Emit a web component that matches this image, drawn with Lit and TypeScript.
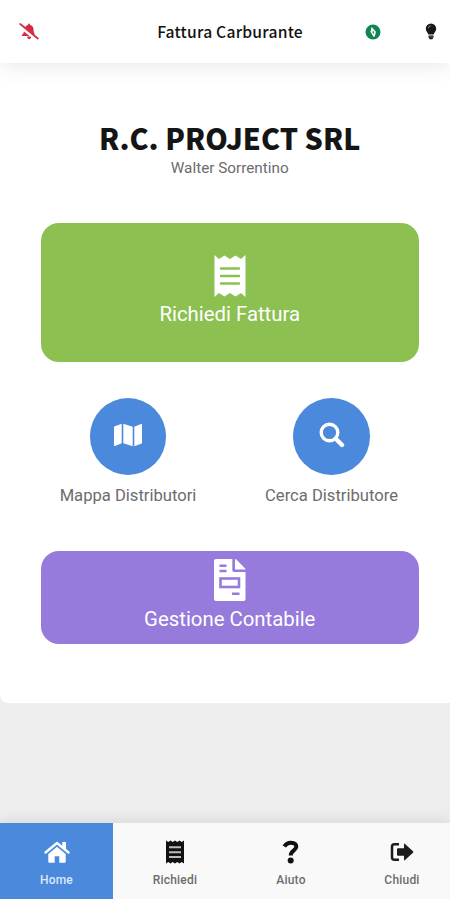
import { LitElement, html, css } from "lit";
import { customElement } from "lit/decorators.js";

const bellOff = html`<svg width="20" height="18" viewBox="0 0 20 18">
  <path fill="#d22c42" d="M6 4.300C6.800 2.800 8 2.200 9 1.900C9 1 9.400.4 10 .4S11 1 11.100 1.900C13.300 2.500 14.400 4 14.500 6.200C14.500 8.600 15 10 16 11.500L15 11.700Z"/>
  <path fill="#d22c42" d="M5 8.600L10.500 13H3.300C2.700 12.800 2.700 12.300 3 11.900C4.200 10.800 4.800 9.800 5 8.600ZM8 13.500H12C12 15.200 11.200 16.200 10.200 16.200S8.300 15.200 8 13.500Z"/>
  <path stroke="#d22c42" stroke-width="1.700" stroke-linecap="round" d="M1.200 1L18.800 15.500"/>
</svg>`;

const compass = html`<svg width="16" height="16" viewBox="0 0 16 16">
  <circle cx="8" cy="8" r="7.500" fill="#12854f"/>
  <path fill="#fff" d="M6.600 3L10.700 7.600C10.700 10 10.200 12.300 8.900 13.200L5.500 8Z"/>
  <path fill="#12854f" d="M7.900 6L9 8.300L8.500 10.300L7.600 8.600Z"/>
</svg>`;

const bulb = html`<svg width="12" height="17" viewBox="0 0 12 17">
  <path fill="#171717" d="M6 .5A5.200 5.200 0 0 1 11.200 5.700C11.200 8.200 9.200 9.200 8.700 11.500H3.300C2.800 9.200.8 8.200.8 5.700A5.200 5.200 0 0 1 6 .5ZM3.500 12.500H8.500V14.200L7.400 16.200H4.600L3.500 14.200Z"/>
  <path d="M3.300 5.300C3.400 3.900 4.300 3 5.800 2.900" fill="none" stroke="#aaa" stroke-width=".9"/>
  <path d="M3.600 14H8.400" stroke="#999" stroke-width=".6"/>
</svg>`;

const receiptLarge = html`<svg width="32" height="42" viewBox="0 0 32 42">
  <path fill="#fff" d="M.5 0L5 4L10.500 .6L16 4L21.500 .6L27 4L31.500 0V42L27 38L21.500 41.400L16 38L10.500 41.400L5 38L.5 42Z"/>
  <path stroke="#8cc152" stroke-width="2.400" stroke-linecap="round" d="M7 13.500H25M7 21H25M7 28.500H25"/>
</svg>`;

const receiptSmall = html`<svg width="18" height="24" viewBox="0 0 18 24">
  <path fill="#111" d="M0 .5L2.300 2L4.500 .5L6.700 2L9 .5L11.300 2L13.500 .5L15.700 2L18 .5V23.500L15.700 22L13.500 23.500L11.300 22L9 23.500L6.700 22L4.500 23.500L2.300 22L0 23.500Z"/>
  <path stroke="#bbb" stroke-width="2" d="M3 7.300H15M3 12.200H15M3 17H15"/>
</svg>`;

const mapIcon = html`<svg width="28" height="24" viewBox="0 0 28 24">
  <path fill="#fff" d="M0 4.200Q0 3.500.8 3.200L7.700 .7V20.300L1 23Q0 23.300 0 22.300ZM9.300 .7L18.700 3.800V23.300L9.300 20.200ZM20.300 3.700L27 1Q28 .7 28 1.700V19.800Q28 20.500 27.200 20.800L20.300 23.300Z"/>
</svg>`;

const search = html`<svg width="26" height="26" viewBox="0 0 26 26" fill="none" stroke="#fff">
  <circle cx="10.500" cy="10.500" r="8.300" stroke-width="3.400"/>
  <path d="M16.800 16.800L23 23" stroke-width="4.400" stroke-linecap="round"/>
</svg>`;

const invoice = html`<svg width="32" height="42" viewBox="0 0 32 42">
  <path fill="#fff" d="M2 0H18.300V11.200Q18.300 13 20.200 13H31.500V40Q31.500 42 29.500 42H2Q0 42 0 40V2Q0 0 2 0ZM21 0Q21.700 0 22.300 .6L30.900 9.200Q31.500 9.800 31.500 10.400H21Z"/>
  <path stroke="#967adc" stroke-width="2.500" d="M5.500 6.700H12.500M5.500 12H12.500M18 34.800H25.500"/>
  <rect x="6.500" y="19.500" width="18.500" height="8.500" fill="none" stroke="#967adc" stroke-width="2.600"/>
</svg>`;

const home = html`<svg width="26" height="22" viewBox="0 0 26 22">
  <path fill="none" stroke="#fff" stroke-width="2.300" stroke-linecap="round" stroke-linejoin="round" d="M1.500 11.500L13 2L24.500 11.500"/>
  <path fill="#fff" d="M18.300 1H22V8.700L18.300 5.600ZM13 5.700L21.700 12.900V20.700Q21.700 21.700 20.700 21.700H15.300V15.300H10.700V21.700H5.300Q4.300 21.700 4.300 20.700V12.900Z"/>
</svg>`;

const question = html`<svg width="18" height="24" viewBox="0 0 18 24">
  <path fill="none" stroke="#111" stroke-width="4" d="M2.300 6.500C4 3.700 6 2.600 9 2.700C12.300 2.800 14.300 4.300 14.300 6.800C14.300 10.600 8.700 10.200 8.700 15.600"/>
  <circle cx="8.700" cy="20.500" r="3" fill="#111"/>
</svg>`;

const exit = html`<svg width="24" height="20" viewBox="0 0 24 20">
  <path fill="none" stroke="#1c1c1c" stroke-width="2.500" d="M9 2.300H4.500Q2 2.300 2 4.800V15.200Q2 17.700 4.500 17.700H9"/>
  <path fill="#1c1c1c" d="M14 2.200Q14 1 15 2L23 9.200Q23.700 10 23 10.800L15 18Q14 19 14 17.800V13.700H8Q7 13.700 7 12.700V7.300Q7 6.300 8 6.300H14Z"/>
</svg>`;

@customElement("app-root")
export class AppRoot extends LitElement {
  static styles = css`
    :host {
      display: flex;
      flex-direction: column;
      width: 450px;
      height: 900px;
      overflow: hidden;
      background: #eee;
      font-family: Roboto, sans-serif;
      color: #6c6c6c;
    }
    svg { display: block; flex: none; }
    .header {
      height: 63px;
      flex: none;
      box-sizing: border-box;
      display: grid;
      grid-template-columns: 60px 340px 50px;
      align-items: center;
      background: #fff;
      box-shadow: 0 2px 22px rgba(0, 0, 0, 0.1);
      z-index: 1;
    }
    .bell { padding-left: 19px; }
    .middle {
      display: grid;
      grid-template-columns: 1fr 16px;
      align-items: center;
      padding-right: 19px;
    }
    .title {
      padding-left: 35px;
      text-align: center;
      font: 500 15.700px/24px "Noto Sans CJK JP", sans-serif;
      color: #111;
      letter-spacing: 0.200px;
      white-space: nowrap;
    }
    .bulb { padding-left: 25px; }
    .card {
      height: 640px;
      flex: none;
      box-sizing: border-box;
      padding: 57px 31.500px 0 41px;
      background: #fff;
      border-radius: 0 0 0 8px;
    }
    .company {
      text-align: center;
      color: #151515;
      font: 900 28.700px/36px "Noto Sans CJK JP", sans-serif;
      white-space: nowrap;
    }
    .user { text-align: center; font-size: 15.300px; line-height: 20px; margin-top: 2px; }
    .tile {
      display: flex;
      flex-direction: column;
      align-items: center;
      box-sizing: border-box;
      border-radius: 18px;
      color: #fff;
      font-size: 20.350px;
      line-height: 24px;
    }
    .green { margin-top: 45px; height: 139px; padding-top: 31.500px; background: #8cc152; }
    .green span { margin-top: 5.500px; }
    .purple { margin-top: 45px; height: 92.500px; padding-top: 8px; background: #967adc; }
    .purple span { margin-top: 6px; }
    .pair { display: grid; grid-template-columns: 174px 174px; justify-content: space-between; margin-top: 36px; }
    .shortcut { display: flex; flex-direction: column; align-items: center; font-size: 16.600px; line-height: 20px; white-space: nowrap; }
    .disc {
      width: 76.500px;
      height: 76.500px;
      border-radius: 50%;
      background: #4a89dc;
      display: flex;
      align-items: center;
      justify-content: center;
      box-sizing: border-box;
      padding-bottom: 2px;
      margin-bottom: 11.500px;
    }
    .nav {
      margin-top: auto;
      height: 76px;
      flex: none;
      display: grid;
      grid-template-columns: 113px 124px 108px 114px;
      background: #f9f9f9;
      border-bottom: 1px solid #fff;
      box-shadow: 0 -2px 14px rgba(0, 0, 0, 0.1);
    }
    .tab { display: flex; flex-direction: column; align-items: center; font-size: 12px; line-height: 16px; font-weight: 500; letter-spacing: 0.200px; }
    .glyph { height: 24px; margin: 17px 0 8px; display: flex; align-items: center; }
    .active { background: #4a89dc; color: #dce8fa; }
  `;

  render() {
    const tabs = [
      { label: "Home", icon: home, active: true },
      { label: "Richiedi", icon: receiptSmall },
      { label: "Aiuto", icon: question },
      { label: "Chiudi", icon: exit },
    ];
    return html`
      <header class="header">
        <div class="bell">${bellOff}</div>
        <div class="middle"><div class="title">Fattura Carburante</div>${compass}</div>
        <div class="bulb">${bulb}</div>
      </header>
      <main class="card">
        <div class="company">R.C. PROJECT SRL</div>
        <div class="user">Walter Sorrentino</div>
        <div class="tile green">${receiptLarge}<span>Richiedi Fattura</span></div>
        <div class="pair">
          <div class="shortcut"><div class="disc">${mapIcon}</div>Mappa Distributori</div>
          <div class="shortcut"><div class="disc">${search}</div>Cerca Distributore</div>
        </div>
        <div class="tile purple">${invoice}<span>Gestione Contabile</span></div>
      </main>
      <nav class="nav">
        ${tabs.map(
          (t) => html`<div class="tab ${t.active ? "active" : ""}">
            <div class="glyph">${t.icon}</div>${t.label}
          </div>`
        )}
      </nav>
    `;
  }
}
